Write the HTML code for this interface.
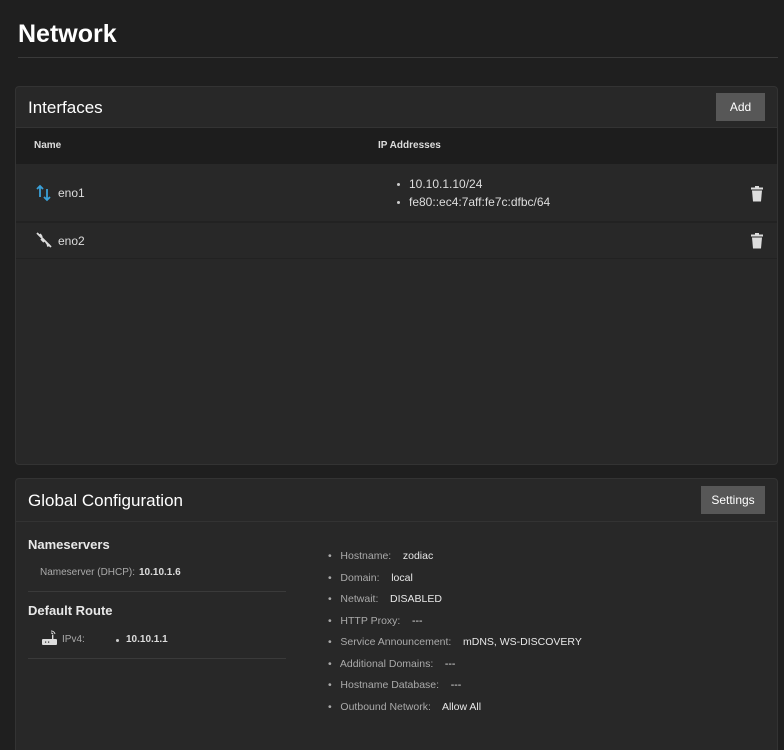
<!DOCTYPE html><html><head><style>
*{box-sizing:border-box;margin:0;padding:0}
html,body{width:784px;height:750px;overflow:hidden}
body{background:#1f1f1f;font-family:"Liberation Sans",sans-serif;color:#e8e8e8;position:relative}
.a{position:absolute}
.card{position:absolute;left:15px;width:763px;background:#282828;border:1px solid #333;border-radius:4px}
.btn{position:absolute;background:#575757;color:#fff;font-size:12px;display:flex;align-items:center;justify-content:center}
.t{font-size:12px;color:#ddd}
.g{color:#aaa}
.dot{position:absolute;width:3px;height:3px;border-radius:50%;background:#ccc}
.r div{white-space:nowrap}
</style></head><body>
<div class="a" style="left:18px;top:20px;font-size:25px;font-weight:bold;color:#fff">Network</div>
<div class="a" style="left:18px;top:57px;width:760px;height:1px;background:#3a3a3a"></div>

<div class="card" style="top:86px;height:379px">
 <div class="a" style="left:12px;top:11px;font-size:17px;color:#fff">Interfaces</div>
 <div class="btn" style="left:700px;top:6px;width:49px;height:28px">Add</div>
 <div class="a" style="left:0;top:40px;width:761px;height:37px;background:#1d1d1d;border-top:1px solid #333"></div>
 <div class="a t" style="left:18px;top:53px;font-size:10px;font-weight:bold">Name</div>
 <div class="a t" style="left:362px;top:53px;font-size:10px;font-weight:bold">IP Addresses</div>
 <div class="a" style="left:0;top:134px;width:761px;height:2px;background:#222"></div>
 <div class="a" style="left:0;top:171px;width:761px;height:1px;background:#222"></div>
 <svg class="a" style="left:20px;top:97px" width="16" height="18" viewBox="0 0 16 18"><path d="M4 13V2M1 5l3-3 3 3M11 5v11M8 13l3 3 3-3" stroke="#3aa0d8" stroke-width="1.8" fill="none"/></svg>
 <div class="a t" style="left:42px;top:99px">eno1</div>
 <svg class="a" style="left:19px;top:144px" width="18" height="18" viewBox="0 0 18 18"><path d="M2 2l14 14M5 3l2 3M6 8l3 3M11 11l2 3M12 15l3-1" stroke="#ddd" stroke-width="1.8" fill="none"/></svg>
 <div class="a t" style="left:42px;top:147px">eno2</div>
 <div class="dot" style="left:381px;top:96px"></div>
 <div class="a t" style="left:393px;top:90px">10.10.1.10/24</div>
 <div class="dot" style="left:381px;top:114px"></div>
 <div class="a t" style="left:393px;top:108px">fe80::ec4:7aff:fe7c:dfbc/64</div>
 <svg class="a" style="left:735px;top:99px" width="12" height="16" viewBox="0 0 12 16"><rect x="0" y="1.5" width="12" height="2" fill="#ddd"/><rect x="4" y="0" width="4" height="2" fill="#ddd"/><path d="M1 4.5h10l-1 11H2z" fill="#ddd"/></svg>
 <svg class="a" style="left:735px;top:146px" width="12" height="16" viewBox="0 0 12 16"><rect x="0" y="1.5" width="12" height="2" fill="#ddd"/><rect x="4" y="0" width="4" height="2" fill="#ddd"/><path d="M1 4.5h10l-1 11H2z" fill="#ddd"/></svg>
</div>

<div class="card" style="top:478px;height:290px">
 <div class="a" style="left:12px;top:12px;font-size:17px;color:#fff">Global Configuration</div>
 <div class="btn" style="left:685px;top:7px;width:64px;height:28px">Settings</div>
 <div class="a" style="left:0;top:42px;width:761px;height:1px;background:#333"></div>
 <div class="a" style="left:12px;top:58px;font-size:13px;font-weight:bold">Nameservers</div>
 <div class="a t g" style="left:24px;top:88px;font-size:10px">Nameserver (DHCP):</div>
 <div class="a t" style="left:123px;top:88px;font-size:10px;font-weight:bold">10.10.1.6</div>
 <div class="a" style="left:12px;top:112px;width:258px;height:1px;background:#3a3a3a"></div>
 <div class="a" style="left:12px;top:124px;font-size:13px;font-weight:bold">Default Route</div>
 <svg class="a" style="left:26px;top:151px" width="15" height="16" viewBox="0 0 15 16"><path d="M9 1a4 4 0 0 1 4 3M9 3a2 2 0 0 1 2 1.5" stroke="#ddd" fill="none"/><rect x="10" y="5" width="1.4" height="4" fill="#ddd"/><rect x="0" y="9" width="15" height="6" rx="1" fill="#ddd"/><rect x="3" y="11.5" width="1.2" height="1.2" fill="#282828"/><rect x="6" y="11.5" width="1.2" height="1.2" fill="#282828"/></svg>
 <div class="a t g" style="left:46px;top:155px;font-size:10px">IPv4:</div>
 <div class="dot" style="left:100px;top:160px"></div>
 <div class="a t" style="left:110px;top:155px;font-size:10px;font-weight:bold">10.10.1.1</div>
 <div class="a" style="left:12px;top:179px;width:258px;height:1px;background:#3a3a3a"></div>
 <div class="a r" style="left:312px;top:67px;font-size:10.5px;line-height:21.5px">
  <div><span class="g">•&nbsp;&nbsp; Hostname:</span>&nbsp;&nbsp;&nbsp; zodiac</div>
  <div><span class="g">•&nbsp;&nbsp; Domain:</span>&nbsp;&nbsp;&nbsp; local</div>
  <div><span class="g">•&nbsp;&nbsp; Netwait:</span>&nbsp;&nbsp;&nbsp; DISABLED</div>
  <div><span class="g">•&nbsp;&nbsp; HTTP Proxy:</span>&nbsp;&nbsp;&nbsp; ---</div>
  <div><span class="g">•&nbsp;&nbsp; Service Announcement:</span>&nbsp;&nbsp;&nbsp; mDNS, WS-DISCOVERY</div>
  <div><span class="g">•&nbsp;&nbsp; Additional Domains:</span>&nbsp;&nbsp;&nbsp; ---</div>
  <div><span class="g">•&nbsp;&nbsp; Hostname Database:</span>&nbsp;&nbsp;&nbsp; ---</div>
  <div><span class="g">•&nbsp;&nbsp; Outbound Network:</span>&nbsp;&nbsp;&nbsp; Allow All</div>
 </div>
</div>
</body></html>
